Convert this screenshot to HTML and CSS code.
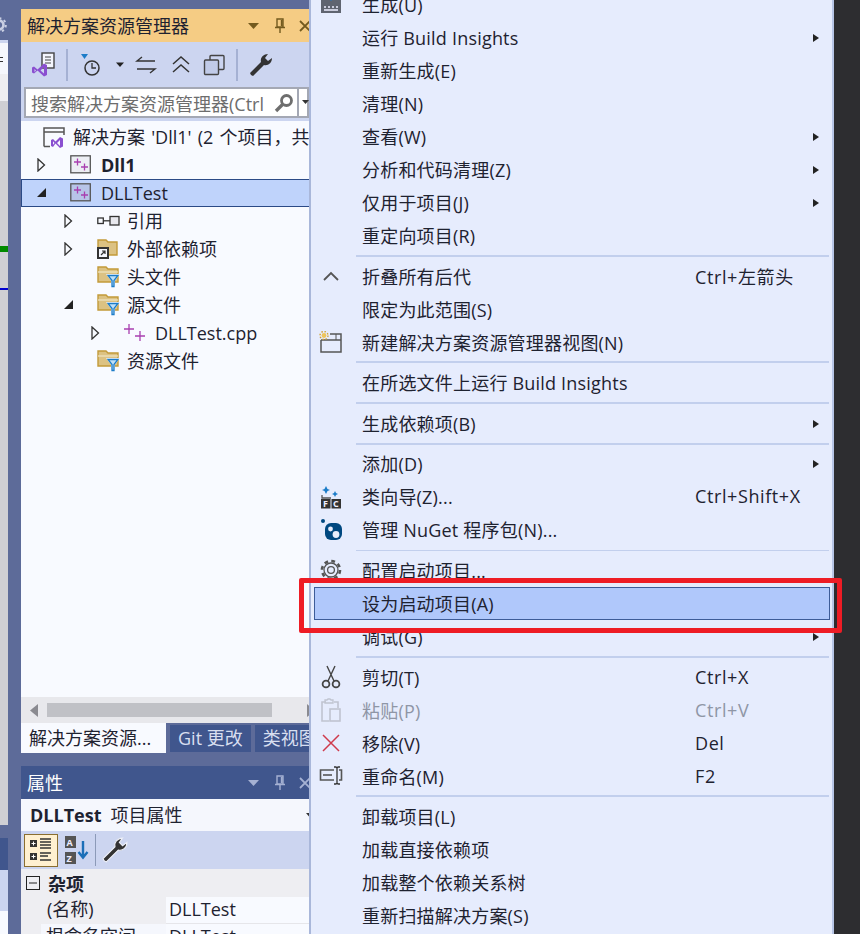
FILE: index.html
```html
<!DOCTYPE html>
<html lang="zh-CN">
<head>
<meta charset="utf-8">
<title>解决方案资源管理器</title>
<link rel="stylesheet" href="styles.css">
</head>
<body>
<div class="screen">
  <div class="edge">
    <div class="edge-top">
      <svg class="edge-gear" width="16" height="16" viewBox="0 0 16 16"><circle cx="8" cy="8" r="4.500" fill="none" stroke="#c9cfe3" stroke-width="2.600"/><circle cx="8" cy="8" r="6.800" fill="none" stroke="#c9cfe3" stroke-width="2" stroke-dasharray="2.400 2.900"/></svg>
    </div>
    <div class="edge-tool"><span class="edge-dash"></span></div>
    <div class="edge-code"><span class="edge-green"></span><span class="edge-blue"></span></div>
    <div class="edge-head"></div>
    <div class="edge-tb"></div>
    <div class="edge-rest"></div>
  </div>
  <div class="panels">
    <section class="explorer">
      <header class="title title-active">
        <span class="title-text">解决方案资源管理器</span>
        <span class="title-icons">
          <svg width="14" height="8" viewBox="0 0 14 8"><path d="M1 1h11L6.500 7z" fill="#735a1e"/></svg>
          <svg width="12" height="16" viewBox="0 0 12 16"><path d="M3 1h6v8H3zM1 9.500h10M6 10v5M7.500 2v6" fill="none" stroke="#735a1e" stroke-width="1.400"/></svg>
          <svg width="12" height="12" viewBox="0 0 12 12"><path d="M1 1l10 10M11 1L1 11" stroke="#735a1e" stroke-width="1.800"/></svg>
        </span>
      </header>
      <div class="toolbar">
        <svg class="tool" width="24" height="25" viewBox="0 0 24 25"><rect x="11" y="1" width="12" height="15" fill="#f4f6fd" stroke="#444" stroke-width="1.400"/><path d="M14 5h6M14 8h6M14 11h6" stroke="#444"/><path d="M1 15.500l2-1 3.500 3 6.500-6 3 1.500v10l-3 1.500-6.500-6-3.500 3-2-1zM3.500 17v3l1.500-1.500zM13 15l-3.500 3.500 3.500 3z" fill="#8a4fd0" fill-rule="evenodd"/></svg>
        <span class="tool-sep"></span>
        <svg class="tool" width="24" height="24" viewBox="0 0 24 24"><path d="M2 1h7L5.500 6z" fill="#1c7cc8"/><circle cx="13" cy="15" r="7" fill="none" stroke="#333" stroke-width="1.500"/><path d="M13 10v5h4" fill="none" stroke="#333" stroke-width="1.300"/></svg>
        <svg class="tool-drop" width="9" height="6" viewBox="0 0 9 6"><path d="M0 .500h8L4 5z" fill="#222"/></svg>
        <svg class="tool tool-sync" width="22" height="20" viewBox="0 0 22 20"><path d="M20 6H2l5-4M2 14h18l-5 4" fill="none" stroke="#333" stroke-width="1.400"/></svg>
        <svg class="tool tool-collapse" width="22" height="20" viewBox="0 0 22 20"><path d="M3 9l8-7 8 7M3 17l8-7 8 7" fill="none" stroke="#333" stroke-width="1.500"/></svg>
        <svg class="tool tool-copy" width="22" height="22" viewBox="0 0 22 22"><rect x="7" y="1.500" width="14" height="14" rx="1" fill="none" stroke="#444" stroke-width="1.400"/><rect x="1.500" y="6" width="14" height="14.500" rx="1" fill="#c1cbe8" stroke="#444" stroke-width="1.400"/></svg>
        <span class="tool-sep"></span>
        <svg class="tool" width="24" height="24" viewBox="0 0 24 24"><path d="M2 22l-1-2L12 9c-1-4 2-8 7-8l-3 4 3 3 4-3c0 5-4 8-8 7L4 23z" fill="#333"/></svg>
      </div>
      <div class="search">
        <span class="search-box">
          <span class="search-text">搜索解决方案资源管理器(Ctrl</span>
          <svg class="search-icon" width="20" height="20" viewBox="0 0 20 20"><circle cx="12.500" cy="7.500" r="5" fill="none" stroke="#6e6e6e" stroke-width="2.800"/><path d="M8.500 11.500L2 18" stroke="#6e6e6e" stroke-width="3.400"/></svg>
        </span>
        <span class="search-drop"><svg width="7" height="4" viewBox="0 0 7 4"><path d="M0 0h7L3.500 4z" fill="#333"/></svg></span>
      </div>
      <div class="tree">
        <div class="node n-sol">
          <svg class="ico" width="22" height="22" viewBox="0 0 22 22"><path d="M1 20.500V2h20v7M1 6h20M1 20.500h6" fill="none" stroke="#555" stroke-width="1.500"/><path d="M8 14l2-1 2.500 2.500 4.500-4.500 3 1.500v8l-3 1.500-4.500-4.500L10 21l-2-1zM10 15.200v3.600l1.500-1.800zM17 14l-3 3 3 3z" fill="#8a4fd0" fill-rule="evenodd"/></svg>
          <span>解决方案 'Dll1' (2 个项目，共</span>
        </div>
        <div class="node n-proj">
          <svg class="arrow" width="9" height="14" viewBox="0 0 9 14"><path d="M1 1l6.500 6L1 13z" fill="none" stroke="#333" stroke-width="1.300"/></svg>
          <svg class="ico proj" width="22" height="20" viewBox="0 0 22 20"><rect x=".800" y=".800" width="19.500" height="17" fill="#eceef4" stroke="#555" stroke-width="1.300"/><path d="M4 7h7M7.500 3.500v7M11 12h7M14.500 8.500v7" stroke="#a83fb0" stroke-width="1.300"/></svg>
          <b>Dll1</b>
        </div>
        <div class="node n-proj n-sel">
          <svg class="arrow" width="9" height="14" viewBox="0 0 9 14"><path d="M0 11L9 2v9z" fill="#222"/></svg>
          <svg class="ico proj" width="22" height="20" viewBox="0 0 22 20"><rect x=".800" y=".800" width="19.500" height="17" fill="#b7c4e8" stroke="#555" stroke-width="1.300"/><path d="M4 7h7M7.500 3.500v7M11 12h7M14.500 8.500v7" stroke="#a83fb0" stroke-width="1.300"/></svg>
          <span>DLLTest</span>
        </div>
        <div class="node n-child">
          <svg class="arrow" width="9" height="14" viewBox="0 0 9 14"><path d="M1 1l6.500 6L1 13z" fill="none" stroke="#333" stroke-width="1.300"/></svg>
          <svg class="ico" width="24" height="14" viewBox="0 0 24 14"><rect x=".800" y="4" width="5.500" height="5.500" fill="none" stroke="#333" stroke-width="1.300"/><path d="M6 6.800h7" stroke="#333" stroke-width="1.300"/><rect x="13" y="2.500" width="9" height="8.500" fill="#e8e8ee" stroke="#333" stroke-width="1.300"/></svg>
          <span>引用</span>
        </div>
        <div class="node n-child">
          <svg class="arrow" width="9" height="14" viewBox="0 0 9 14"><path d="M1 1l6.500 6L1 13z" fill="none" stroke="#333" stroke-width="1.300"/></svg>
          <svg class="ico" width="24" height="22" viewBox="0 0 24 22"><path d="M1 2h8l2 2h9v13H1z" fill="#dcc283" stroke="#c29a3a" stroke-width="1.400"/><rect x="0" y="9" width="12" height="12" fill="#333"/><rect x="2" y="11" width="8" height="8" fill="#f4f6fd"/><path d="M4 17l4-4M5 13h3v3" fill="none" stroke="#333" stroke-width="1.200"/></svg>
          <span>外部依赖项</span>
        </div>
        <div class="node n-child n-leaf">
          <svg class="ico" width="24" height="24" viewBox="0 0 24 24"><path d="M1 2h8l2 2h10v13H1z" fill="#dcc283" stroke="#c29a3a" stroke-width="1.400"/><path d="M1 7h20" stroke="#f0e6c4" stroke-width="1.200"/><path d="M9 9h14l-5 6.500V23h-4v-7.500z" fill="#f8faff"/><path d="M11 10.500h10l-4 5v6h-2v-6z" fill="#bfe0f8" stroke="#1c7cc8" stroke-width="1.300"/></svg>
          <span>头文件</span>
        </div>
        <div class="node n-child">
          <svg class="arrow" width="9" height="14" viewBox="0 0 9 14"><path d="M0 11L9 2v9z" fill="#222"/></svg>
          <svg class="ico" width="24" height="24" viewBox="0 0 24 24"><path d="M1 2h8l2 2h10v13H1z" fill="#dcc283" stroke="#c29a3a" stroke-width="1.400"/><path d="M1 7h20" stroke="#f0e6c4" stroke-width="1.200"/><path d="M9 9h14l-5 6.500V23h-4v-7.500z" fill="#f8faff"/><path d="M11 10.500h10l-4 5v6h-2v-6z" fill="#bfe0f8" stroke="#1c7cc8" stroke-width="1.300"/></svg>
          <span>源文件</span>
        </div>
        <div class="node n-file">
          <svg class="arrow" width="9" height="14" viewBox="0 0 9 14"><path d="M1 1l6.500 6L1 13z" fill="none" stroke="#333" stroke-width="1.300"/></svg>
          <svg class="ico" width="23" height="20" viewBox="0 0 23 20"><path d="M1 6h10M6 1v10M12 13h10M17 8v10" stroke="#a83fb0" stroke-width="1.300"/></svg>
          <span>DLLTest.cpp</span>
        </div>
        <div class="node n-child n-leaf">
          <svg class="ico" width="24" height="24" viewBox="0 0 24 24"><path d="M1 2h8l2 2h10v13H1z" fill="#dcc283" stroke="#c29a3a" stroke-width="1.400"/><path d="M1 7h20" stroke="#f0e6c4" stroke-width="1.200"/><path d="M9 9h14l-5 6.500V23h-4v-7.500z" fill="#f8faff"/><path d="M11 10.500h10l-4 5v6h-2v-6z" fill="#bfe0f8" stroke="#1c7cc8" stroke-width="1.300"/></svg>
          <span>资源文件</span>
        </div>
      </div>
      <div class="hscroll">
        <svg width="8" height="13" viewBox="0 0 8 13"><path d="M8 0v13L0 6.500z" fill="#8a8a90"/></svg>
        <span class="hthumb"></span>
        <svg class="hnext" width="8" height="13" viewBox="0 0 8 13"><path d="M0 0v13l8-6.500z" fill="#8a8a90"/></svg>
      </div>
      <div class="tabs">
        <span class="tab tab-on">解决方案资源...</span>
        <span class="tab">Git 更改</span>
        <span class="tab">类视图</span>
      </div>
    </section>
    <section class="props">
      <header class="title title-idle">
        <span class="title-text">属性</span>
        <span class="title-icons">
          <svg width="14" height="8" viewBox="0 0 14 8"><path d="M1 1h11L6.500 7z" fill="#a5b1d3"/></svg>
          <svg width="12" height="16" viewBox="0 0 12 16"><path d="M3 1h6v8H3zM1 9.500h10M6 10v5M7.500 2v6" fill="none" stroke="#a5b1d3" stroke-width="1.400"/></svg>
          <svg width="12" height="12" viewBox="0 0 12 12"><path d="M1 1l10 10M11 1L1 11" stroke="#a5b1d3" stroke-width="1.800"/></svg>
        </span>
      </header>
      <div class="prop-head"><b>DLLTest</b><span class="prop-sub">项目属性</span><svg class="prop-drop" width="7" height="4" viewBox="0 0 7 4"><path d="M0 0h7L3.500 4z" fill="#333"/></svg></div>
      <div class="prop-tools">
        <span class="pt-on"><svg width="28" height="28" viewBox="0 0 28 28"><path d="M3 4h7v7H3zM3 17h7v7H3z" fill="#333"/><path d="M4.500 7.500h4M6.500 5.500v4M4.500 20.500h4M6.500 18.500v4" stroke="#fff"/><path d="M13 3h11M13 6h11M13 9h11M13 12h11M13 17h11M13 20h8M13 24h11" stroke="#333" stroke-width="1.500"/></svg></span>
        <svg class="pt-az" width="26" height="30" viewBox="0 0 26 30"><rect x="1" y="1" width="11" height="12" fill="#555"/><rect x="1" y="17" width="11" height="12" fill="#555"/><text x="2.500" y="11" class="pt-letter">A</text><text x="2.500" y="27" class="pt-letter">Z</text><path d="M19 6v16M14.500 17l4.500 5.500 4.500-5.500" fill="none" stroke="#1c6fb8" stroke-width="2.400"/></svg>
        <span class="pt-sep"></span>
        <svg class="pt-wr" width="26" height="26" viewBox="0 0 24 24"><path d="M2 22l-1-2L12 9c-1-4 2-8 7-8l-3 4 3 3 4-3c0 5-4 8-8 7L4 23z" fill="#333" stroke="#eef0f8"/></svg>
      </div>
      <div class="prop-grid">
        <div class="cat">
          <svg width="15" height="15" viewBox="0 0 15 15"><rect x=".500" y=".500" width="13" height="13" fill="none" stroke="#222"/><path d="M3 7h8" stroke="#222"/></svg>
          <b>杂项</b>
        </div>
        <div class="prop-row"><span class="prop-k">(名称)</span><span class="prop-v">DLLTest</span></div>
        <div class="prop-row"><span class="prop-k prop-k2">根命名空间</span><span class="prop-v">DLLTest</span></div>
      </div>
    </section>
  </div>
  <nav class="menu">
    <div class="mi mi-first"><span class="mi-ic"><svg width="22" height="20" viewBox="0 0 22 20"><rect x="1" y="4" width="20" height="14" fill="#5f6470"/><path d="M4 12h2M8 12h2M12 12h2M16 12h2M4 15h14" stroke="#eef" stroke-width="1.500"/><path d="M7 1h8l-4 5z" fill="#1c7cc8"/></svg></span><span class="mi-t">生成(U)</span></div>
    <div class="mi"><span class="mi-ic"></span><span class="mi-t">运行 Build Insights</span><i class="sub"></i></div>
    <div class="mi"><span class="mi-ic"></span><span class="mi-t">重新生成(E)</span></div>
    <div class="mi"><span class="mi-ic"></span><span class="mi-t">清理(N)</span></div>
    <div class="mi"><span class="mi-ic"></span><span class="mi-t">查看(W)</span><i class="sub"></i></div>
    <div class="mi"><span class="mi-ic"></span><span class="mi-t">分析和代码清理(Z)</span><i class="sub"></i></div>
    <div class="mi"><span class="mi-ic"></span><span class="mi-t">仅用于项目(J)</span><i class="sub"></i></div>
    <div class="mi"><span class="mi-ic"></span><span class="mi-t">重定向项目(R)</span></div>
    <div class="sep"></div>
    <div class="mi"><span class="mi-ic"><svg width="18" height="12" viewBox="0 0 18 12"><path d="M2 10l7-7 7 7" fill="none" stroke="#555" stroke-width="1.800"/></svg></span><span class="mi-t">折叠所有后代</span><span class="mi-k">Ctrl+左箭头</span></div>
    <div class="mi"><span class="mi-ic"></span><span class="mi-t">限定为此范围(S)</span></div>
    <div class="mi"><span class="mi-ic"><svg width="24" height="22" viewBox="0 0 24 22"><path d="M2 9v12h20V3H11M2 9h20" fill="none" stroke="#555" stroke-width="1.500"/><path d="M17 3v6" stroke="#555"/><circle cx="5" cy="4.500" r="2.400" fill="#eec55c"/><circle cx="5" cy="4.500" r="4" fill="none" stroke="#d2a232" stroke-width="1.400" stroke-dasharray="1.500 1.640"/></svg></span><span class="mi-t">新建解决方案资源管理器视图(N)</span></div>
    <div class="sep"></div>
    <div class="mi"><span class="mi-ic"></span><span class="mi-t">在所选文件上运行 Build Insights</span></div>
    <div class="sep"></div>
    <div class="mi"><span class="mi-ic"></span><span class="mi-t">生成依赖项(B)</span><i class="sub"></i></div>
    <div class="sep"></div>
    <div class="mi"><span class="mi-ic"></span><span class="mi-t">添加(D)</span><i class="sub"></i></div>
    <div class="mi"><span class="mi-ic"><svg width="22" height="24" viewBox="0 0 22 24"><path d="M6 1l1.500 3L10 5 7.500 6 6 9 4.500 6 2 5l2.500-1zM15 6l1 2 2 1-2 1-1 2-1-2-2-1 2-1z" fill="#1c7cc8"/><path d="M2 10v3h9" fill="none" stroke="#555" stroke-width="1.300"/><rect x="1" y="14" width="9.500" height="9.500" fill="#333"/><rect x="11.500" y="14" width="9.500" height="9.500" fill="#333"/><text x="3" y="22" class="mi-fc">F</text><text x="13" y="22" class="mi-fc">C</text></svg></span><span class="mi-t">类向导(Z)...</span><span class="mi-k">Ctrl+Shift+X</span></div>
    <div class="mi"><span class="mi-ic"><svg width="22" height="24" viewBox="0 0 22 24"><circle cx="3" cy="3" r="2" fill="#004880"/><rect x="5" y="5" width="17" height="17" rx="6" fill="#004880"/><circle cx="10.500" cy="11" r="2.400" fill="#e8eefc"/><circle cx="16" cy="16.500" r="3.400" fill="#e8eefc"/></svg></span><span class="mi-t">管理 NuGet 程序包(N)...</span></div>
    <div class="sep sep-thin"></div>
    <div class="mi"><span class="mi-ic"><svg width="22" height="22" viewBox="0 0 22 22"><circle cx="11" cy="11" r="3.400" fill="none" stroke="#555" stroke-width="1.300"/><circle cx="11" cy="11" r="7" fill="none" stroke="#555" stroke-width="1.300"/><circle cx="11" cy="11" r="9" fill="none" stroke="#555" stroke-width="2.600" stroke-dasharray="3.800 3.270"/></svg></span><span class="mi-t">配置启动项目...</span></div>
    <div class="mi mi-hot"><span class="mi-ic"></span><span class="mi-t">设为启动项目(A)</span></div>
    <div class="mi"><span class="mi-ic"></span><span class="mi-t">调试(G)</span><i class="sub"></i></div>
    <div class="sep"></div>
    <div class="mi"><span class="mi-ic"><svg width="20" height="24" viewBox="0 0 20 24"><path d="M6 1l7 15M14 1L7 16" stroke="#444" stroke-width="1.400"/><circle cx="5" cy="19" r="3.400" fill="none" stroke="#444" stroke-width="1.800"/><circle cx="15" cy="19" r="3.400" fill="none" stroke="#444" stroke-width="1.800"/></svg></span><span class="mi-t">剪切(T)</span><span class="mi-k">Ctrl+X</span></div>
    <div class="mi mi-off"><span class="mi-ic"><svg width="22" height="24" viewBox="0 0 22 24"><path d="M6 4H2v19h7M14 4h4v6" fill="none" stroke="#c0c4d0" stroke-width="1.600"/><path d="M5 5V2h2l1-1h2l1 1h2v3z" fill="none" stroke="#c0c4d0" stroke-width="1.300"/><rect x="10" y="11" width="10" height="12" fill="none" stroke="#c0c4d0" stroke-width="1.600"/></svg></span><span class="mi-t">粘贴(P)</span><span class="mi-k">Ctrl+V</span></div>
    <div class="mi"><span class="mi-ic"><svg width="20" height="20" viewBox="0 0 20 20"><path d="M2 2l16 16M18 2L2 18" stroke="#cf3a4c" stroke-width="1.500"/></svg></span><span class="mi-t">移除(V)</span><span class="mi-k">Del</span></div>
    <div class="mi"><span class="mi-ic"><svg width="24" height="20" viewBox="0 0 24 20"><path d="M15 4H1.500v10H15M20 4h2.500v10H20" fill="none" stroke="#555" stroke-width="1.600"/><path d="M4 9h9" stroke="#555" stroke-width="1.600"/><path d="M15 1h2l1 1 1-1h2M15 18h2l1-1 1 1h2M18 2v15" fill="none" stroke="#333" stroke-width="1.300"/></svg></span><span class="mi-t">重命名(M)</span><span class="mi-k">F2</span></div>
    <div class="sep"></div>
    <div class="mi"><span class="mi-ic"></span><span class="mi-t">卸载项目(L)</span></div>
    <div class="mi"><span class="mi-ic"></span><span class="mi-t">加载直接依赖项</span></div>
    <div class="mi"><span class="mi-ic"></span><span class="mi-t">加载整个依赖关系树</span></div>
    <div class="mi"><span class="mi-ic"></span><span class="mi-t">重新扫描解决方案(S)</span></div>
  </nav>
  <div class="dark"></div>
  <div class="redbox"></div>
</div>
</body>
</html>
```

FILE: styles.css
```css
* { box-sizing: border-box; }
html, body { margin: 0; padding: 0; }
body { width: 860px; height: 934px; overflow: hidden; font-family: "Open Sans", "Noto Sans CJK SC", sans-serif; font-size: 18px; color: #1e2230; }
svg { display: block; flex: none; }
.screen { position: relative; display: flex; width: 860px; height: 934px; overflow: hidden; background: #5d6b99; }

.edge { width: 8px; flex: none; display: flex; flex-direction: column; overflow: hidden; }
.edge-top { height: 40px; padding: 17px 0 0; }
.edge-gear { margin-left: -9px; }
.edge-tool { height: 34px; background: #f5f7fd; border-top: 3px solid #ccd5f0; padding-top: 14px; }
.edge-dash { display: block; width: 3px; height: 5px; border-top: 1px solid #333; border-bottom: 1px solid #333; }
.edge-code { height: 751px; background: linear-gradient(#eeeef2 0, #eeeef2 27px, #cfcfd4 27px); padding-top: 172px; }
.edge-green { display: block; height: 6px; background: #008a00; }
.edge-blue { display: block; height: 2px; margin-top: 36px; background: #0000d0; }
.edge-head { height: 13px; }
.edge-tb { height: 73px; background: linear-gradient(#40568d 0, #40568d 32px, #ccd5f0 32px); }
.edge-rest { flex: 1; background: #f8faff; }

.panels { width: 288px; margin-left: 13px; padding-top: 9px; display: flex; flex-direction: column; gap: 13px; flex: none; overflow: hidden; }
.explorer, .props { width: 288px; flex: none; }

.title { height: 33px; display: flex; align-items: center; justify-content: space-between; padding-left: 6px; white-space: nowrap; }
.title-text { padding-bottom: 2px; }
.title-active { background: #f5cc84; color: #1e2230; }
.title-idle { background: #40568d; color: #fff; }
.title-icons { display: flex; align-items: center; gap: 13px; width: 64px; flex: none; margin-right: -2px; }

.toolbar { height: 45px; background: #ccd5f0; display: flex; align-items: center; padding-left: 10px; gap: 8px; }
.tool-sep { width: 2px; height: 32px; background: #a5b1d3; margin: 0 3px; flex: none; }
.tool-drop { margin-left: 5px; }
.tool-sync { margin-left: 2px; }
.tool-collapse { margin-left: 5px; }
.tool-copy { margin-left: 3px; }

.search { height: 34px; background: #ccd5f0; padding: 0 0 3px 3px; display: flex; }
.search-box { width: 278px; height: 31px; display: flex; align-items: center; background: #fff; border: 2px solid #a4a8b4; justify-content: space-between; padding: 0 3px 0 5px; overflow: hidden; }
.search-text { color: #6d6d6d; white-space: nowrap; overflow: hidden; }
.search-drop { width: 10px; height: 31px; background: #fff; border: 2px solid #a4a8b4; border-left: 0; padding: 11px 0 0 3px; }

.tree { height: 576px; background: #f8faff; overflow: hidden; padding-top: 2px; }
.node { height: 28px; display: flex; align-items: center; white-space: nowrap; position: relative; }
.node span { padding-bottom: 2px; }
.n-sol { padding-left: 22px; gap: 8px; word-spacing: 1.500px; }
.n-proj { padding-left: 16px; }
.n-proj .ico { margin-left: 24px; margin-right: 9px; }
.n-sel { background: #bfd3fb; border: 1px solid #2b4a86; border-right: 0; padding-left: 15px; }
.node.n-sel span, .node.n-file span { padding-bottom: 0; }
.n-child { padding-left: 43px; }
.n-child .ico { margin-left: 24px; margin-right: 6px; }
.n-leaf { padding-left: 52px; }
.n-file { padding-left: 70px; }
.n-file .ico { margin-left: 23px; margin-right: 9px; }

.hscroll { height: 26px; background: #e8e8ec; display: flex; align-items: center; padding-left: 9px; gap: 9px; }
.hthumb { width: 225px; height: 14px; background: #c0c1c6; flex: none; }
.hnext { margin-left: 26px; }
.tabs { height: 30px; display: flex; background: #5d6b99; gap: 4px; white-space: nowrap; align-items: flex-start; }
.tab { height: 27px; margin-top: 2px; padding: 0 8px; background: #40568d; color: #d8dff0; line-height: 26px; flex: none; }
.tab-on { height: 30px; margin-top: 0; width: 145px; background: #f8faff; color: #1e2230; line-height: 30px; }

.prop-head { height: 32px; background: #f5f7fd; display: flex; align-items: center; padding-left: 9px; gap: 9px; white-space: nowrap; }
.prop-sub { padding-bottom: 2px; }
.prop-drop { margin-left: 115px; }
.prop-tools { height: 38px; background: #ccd5f0; display: flex; align-items: center; padding-left: 3px; }
.pt-on { width: 34px; height: 33px; background: #fff0d0; border: 1px solid #8a6e30; display: flex; align-items: center; justify-content: center; }
.pt-az { margin-left: 6px; }
.pt-letter { font-size: 9px; font-weight: 700; fill: #eef; }
.pt-sep { width: 1px; height: 32px; background: #8c9ab8; margin-left: 5px; }
.pt-wr { margin-left: 6px; }
.prop-grid { height: 70px; background: #eeeef2; overflow: hidden; }
.cat { height: 28px; display: flex; align-items: center; padding-left: 5px; gap: 7px; }
.prop-row { height: 27px; display: flex; }
.prop-k { width: 145px; padding-left: 26px; line-height: 25px; flex: none; }
.prop-k2 { width: 125px; margin-left: 20px; padding-left: 5px; background: #f5f7fd; }
.prop-v { flex: 1; background: #f8faff; padding-left: 3px; line-height: 25px; border-bottom: 1px solid #e6e6ea; }

.menu { width: 525px; flex: none; height: 960px; margin-top: -12px; background: #e6ecfd; border-left: 2px solid #a9b7da; border-right: 2px solid #b8c6e6; padding-right: 3px; display: flex; flex-direction: column; }
.mi { height: 33px; flex: none; display: flex; align-items: center; position: relative; white-space: nowrap; }
.mi-ic { width: 51px; flex: none; height: 33px; display: flex; align-items: center; justify-content: center; padding-right: 11px; }
.mi-t { width: 333px; flex: none; letter-spacing: .2px; padding-bottom: 1px; }
.mi-k { flex: none; letter-spacing: .6px; padding-bottom: 1px; }
.sub { position: absolute; right: 10px; top: 13px; width: 0; height: 0; border-left: 6px solid #222; border-top: 4.500px solid transparent; border-bottom: 4.500px solid transparent; }
.mi-hot { background: #b0c8fb; border: 1px solid #3d5c98; margin-left: 3px; margin-right: -1px; }
.mi-hot .mi-ic { width: 47px; padding-right: 0; }
.mi-off { color: #8f96a6; }
.mi-fc { font-size: 9px; font-weight: 700; fill: #eef; }
.sep { height: 7.600px; flex: none; margin-left: 45px; display: flex; align-items: center; }
.sep::before { content: ""; display: block; width: 100%; height: 2px; background: #c2cfed; }
.sep-thin::before { height: 1px; }

.dark { flex: 1; background: #2d2d30; }
.redbox { position: absolute; left: 299px; top: 578px; width: 543px; height: 55px; border: 5px solid #ee1c25; border-radius: 2px; }
```
